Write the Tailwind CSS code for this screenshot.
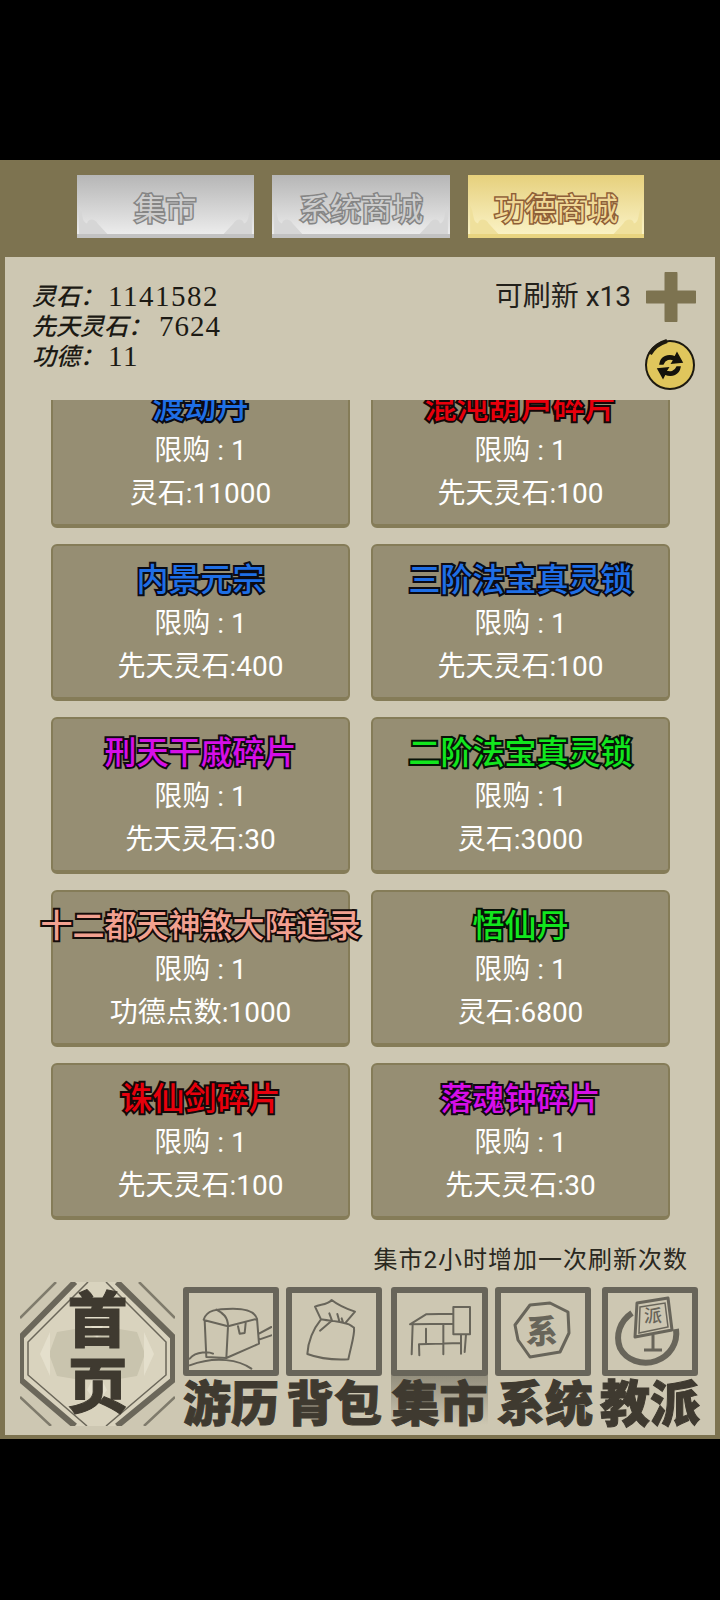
<!doctype html>
<html lang="zh-CN">
  <head>
    <meta charset="UTF-8" />
    <title>功德商城</title>
    <script src="https://cdn.jsdelivr.net/npm/@tailwindcss/browser@4"></script>
  </head>
  <body class="bg-black">
    <div class="w-[720px] h-[1600px] bg-black flex flex-col font-['Roboto','Noto_Sans_CJK_SC',sans-serif] overflow-hidden">
      <div class="h-[160px] shrink-0"></div>

      <!-- shop panel -->
      <main class="h-[1279px] shrink-0 bg-[#7d7350] flex flex-col px-[5px] pb-[4px]">
        <!-- tabs -->
        <div class="h-[97px] shrink-0 pt-[15px] pl-[72px] flex gap-[18px]">
          <div class="relative w-[177px] h-[63px] pt-[11px] bg-gradient-to-b from-[#b6b6b6] to-[#ececec] border-b-[4px] border-[#c2c2c2] flex items-center justify-center">
            <svg class="absolute left-0 bottom-0" width="36" height="30" viewBox="0 0 36 34"><path d="M0 2c5 8 2 18 9 20 1-6 9-6 12 0l11 12H0z" fill="#d6d6d6" /></svg>
            <svg class="absolute right-0 bottom-0" width="36" height="30" viewBox="0 0 36 34"><path d="M36 2c-5 8-2 18-9 20-1-6-9-6-12 0L4 34h32z" fill="#d6d6d6" /></svg>
            <span class="relative text-[31px] text-[#cdcdcd] [-webkit-text-stroke:3px_#858585] [paint-order:stroke_fill]">集市</span>
          </div>
          <div class="relative w-[178px] h-[63px] pt-[11px] bg-gradient-to-b from-[#b6b6b6] to-[#ececec] border-b-[4px] border-[#c2c2c2] flex items-center justify-center">
            <svg class="absolute left-0 bottom-0" width="36" height="30" viewBox="0 0 36 34"><path d="M0 2c5 8 2 18 9 20 1-6 9-6 12 0l11 12H0z" fill="#d6d6d6" /></svg>
            <svg class="absolute right-0 bottom-0" width="36" height="30" viewBox="0 0 36 34"><path d="M36 2c-5 8-2 18-9 20-1-6-9-6-12 0L4 34h32z" fill="#d6d6d6" /></svg>
            <span class="relative text-[31px] text-[#cdcdcd] [-webkit-text-stroke:3px_#858585] [paint-order:stroke_fill]">系统商城</span>
          </div>
          <div class="relative w-[176px] h-[63px] pt-[11px] bg-gradient-to-b from-[#e6d07c] to-[#faf2c4] border-b-[4px] border-[#e8d480] flex items-center justify-center">
            <svg class="absolute left-0 bottom-0" width="36" height="30" viewBox="0 0 36 34"><path d="M0 2c5 8 2 18 9 20 1-6 9-6 12 0l11 12H0z" fill="#efe09c" /></svg>
            <svg class="absolute right-0 bottom-0" width="36" height="30" viewBox="0 0 36 34"><path d="M36 2c-5 8-2 18-9 20-1-6-9-6-12 0L4 34h32z" fill="#efe09c" /></svg>
            <span class="relative text-[31px] text-[#efd795] [-webkit-text-stroke:3px_#8e5f38] [paint-order:stroke_fill]">功德商城</span>
          </div>
        </div>

        <div class="flex-1 bg-[#cdc7b2] flex flex-col overflow-hidden">
          <!-- balance header -->
          <div class="relative z-10 h-[143px] shrink-0 bg-[#cdc7b2] flex justify-between pl-[27px] pr-[19px]">
            <div class="pt-[25px] text-[#1c1a14]">
              <div class="h-[30px] flex items-center text-[24px] italic"><span class="w-[76px] font-medium">灵石：</span><span class="font-['Liberation_Serif',serif] not-italic font-normal text-[29px] tracking-[1.5px]">1141582</span></div>
              <div class="h-[30px] flex items-center text-[24px] italic"><span class="w-[127px] font-medium">先天灵石：</span><span class="font-['Liberation_Serif',serif] not-italic font-normal text-[29px] tracking-[1px]">7624</span></div>
              <div class="h-[30px] flex items-center text-[24px] italic"><span class="w-[76px] font-medium">功德：</span><span class="font-['Liberation_Serif',serif] not-italic font-normal text-[29px] tracking-[1.5px]">11</span></div>
            </div>
            <div class="flex flex-col items-end pt-[15px]">
              <div class="flex items-center gap-[15px]">
                <span class="text-[28px] text-[#23211b]">可刷新 x13</span>
                <svg width="50" height="50" viewBox="0 0 50 50"><path d="M25 2v46M2 25h46" stroke="#7d7350" stroke-width="13" stroke-linecap="round" /></svg>
              </div>
              <svg class="mt-[16px]" width="52" height="52" viewBox="0 0 52 52">
                <circle cx="26" cy="27" r="24" fill="#e0c65c" stroke="#1d1a10" stroke-width="2" />
                <path d="M6 16c4-7 10-11 17-13" fill="none" stroke="#1d1a10" stroke-width="4" />
                <path d="M16 26c1-7 8-10 15-7l2-4 5 9-10 1 2-3c-4-2-9-1-11 4z" fill="#15130c" stroke="#15130c" stroke-width="1.5" />
                <path d="M36 29c-1 7-8 10-15 7l-2 4-5-9 10-1-2 3c4 2 9 1 11-4z" fill="#15130c" stroke="#15130c" stroke-width="1.5" />
              </svg>
            </div>
          </div>

          <!-- goods list, scrolled up a little -->
          <div class="h-[839px] shrink-0 overflow-hidden">
            <div class="-mt-[29px] pl-[46px] grid grid-cols-[299px_299px] gap-x-[21px] gap-y-[16px]">
              <div class="h-[157px] pt-[13px] bg-[#968e73] border-2 border-b-[4px] border-[#857c58] rounded-[6px] text-center text-white text-[28px]">
                <div class="h-[43px] leading-[43px] whitespace-nowrap text-[32px] font-medium text-[#1f6fe6] [-webkit-text-stroke:4px_#0b0b14] [paint-order:stroke_fill]">渡劫丹</div>
                <div class="h-[43px] leading-[43px]">限购 : 1</div>
                <div class="h-[43px] leading-[43px]">灵石:11000</div>
              </div>
              <div class="h-[157px] pt-[13px] bg-[#968e73] border-2 border-b-[4px] border-[#857c58] rounded-[6px] text-center text-white text-[28px]">
                <div class="h-[43px] leading-[43px] whitespace-nowrap text-[32px] font-medium text-[#e8000c] [-webkit-text-stroke:4px_#140808] [paint-order:stroke_fill]">混沌葫芦碎片</div>
                <div class="h-[43px] leading-[43px]">限购 : 1</div>
                <div class="h-[43px] leading-[43px]">先天灵石:100</div>
              </div>
              <div class="h-[157px] pt-[13px] bg-[#968e73] border-2 border-b-[4px] border-[#857c58] rounded-[6px] text-center text-white text-[28px]">
                <div class="h-[43px] leading-[43px] whitespace-nowrap text-[32px] font-medium text-[#1f6fe6] [-webkit-text-stroke:4px_#0b0b14] [paint-order:stroke_fill]">内景元宗</div>
                <div class="h-[43px] leading-[43px]">限购 : 1</div>
                <div class="h-[43px] leading-[43px]">先天灵石:400</div>
              </div>
              <div class="h-[157px] pt-[13px] bg-[#968e73] border-2 border-b-[4px] border-[#857c58] rounded-[6px] text-center text-white text-[28px]">
                <div class="h-[43px] leading-[43px] whitespace-nowrap text-[32px] font-medium text-[#1f6fe6] [-webkit-text-stroke:4px_#0b0b14] [paint-order:stroke_fill]">三阶法宝真灵锁</div>
                <div class="h-[43px] leading-[43px]">限购 : 1</div>
                <div class="h-[43px] leading-[43px]">先天灵石:100</div>
              </div>
              <div class="h-[157px] pt-[13px] bg-[#968e73] border-2 border-b-[4px] border-[#857c58] rounded-[6px] text-center text-white text-[28px]">
                <div class="h-[43px] leading-[43px] whitespace-nowrap text-[32px] font-medium text-[#d60ee8] [-webkit-text-stroke:4px_#120812] [paint-order:stroke_fill]">刑天干戚碎片</div>
                <div class="h-[43px] leading-[43px]">限购 : 1</div>
                <div class="h-[43px] leading-[43px]">先天灵石:30</div>
              </div>
              <div class="h-[157px] pt-[13px] bg-[#968e73] border-2 border-b-[4px] border-[#857c58] rounded-[6px] text-center text-white text-[28px]">
                <div class="h-[43px] leading-[43px] whitespace-nowrap text-[32px] font-medium text-[#12e61e] [-webkit-text-stroke:4px_#081208] [paint-order:stroke_fill]">二阶法宝真灵锁</div>
                <div class="h-[43px] leading-[43px]">限购 : 1</div>
                <div class="h-[43px] leading-[43px]">灵石:3000</div>
              </div>
              <div class="h-[157px] pt-[13px] bg-[#968e73] border-2 border-b-[4px] border-[#857c58] rounded-[6px] text-center text-white text-[28px] flex flex-col items-center">
                <div class="h-[43px] leading-[43px] whitespace-nowrap text-[32px] font-medium text-[#f2a090] [-webkit-text-stroke:4px_#140c0a] [paint-order:stroke_fill]">十二都天神煞大阵道录</div>
                <div class="h-[43px] leading-[43px]">限购 : 1</div>
                <div class="h-[43px] leading-[43px]">功德点数:1000</div>
              </div>
              <div class="h-[157px] pt-[13px] bg-[#968e73] border-2 border-b-[4px] border-[#857c58] rounded-[6px] text-center text-white text-[28px]">
                <div class="h-[43px] leading-[43px] whitespace-nowrap text-[32px] font-medium text-[#12e61e] [-webkit-text-stroke:4px_#081208] [paint-order:stroke_fill]">悟仙丹</div>
                <div class="h-[43px] leading-[43px]">限购 : 1</div>
                <div class="h-[43px] leading-[43px]">灵石:6800</div>
              </div>
              <div class="h-[157px] pt-[13px] bg-[#968e73] border-2 border-b-[4px] border-[#857c58] rounded-[6px] text-center text-white text-[28px]">
                <div class="h-[43px] leading-[43px] whitespace-nowrap text-[32px] font-medium text-[#e8000c] [-webkit-text-stroke:4px_#140808] [paint-order:stroke_fill]">诛仙剑碎片</div>
                <div class="h-[43px] leading-[43px]">限购 : 1</div>
                <div class="h-[43px] leading-[43px]">先天灵石:100</div>
              </div>
              <div class="h-[157px] pt-[13px] bg-[#968e73] border-2 border-b-[4px] border-[#857c58] rounded-[6px] text-center text-white text-[28px]">
                <div class="h-[43px] leading-[43px] whitespace-nowrap text-[32px] font-medium text-[#d60ee8] [-webkit-text-stroke:4px_#120812] [paint-order:stroke_fill]">落魂钟碎片</div>
                <div class="h-[43px] leading-[43px]">限购 : 1</div>
                <div class="h-[43px] leading-[43px]">先天灵石:30</div>
              </div>
            </div>
          </div>

          <!-- refresh hint -->
          <div class="h-[42px] shrink-0 flex items-center justify-end pr-[27px] text-[24px] tracking-[1px] text-[#2a2820]">集市2小时增加一次刷新次数</div>

          <!-- bottom nav -->
          <div class="relative flex-1 flex pl-[15px]">
            <div class="relative mt-[1px] w-[155px] h-[144px] shrink-0 flex flex-col items-center">
              <svg class="absolute inset-0" width="155" height="144" viewBox="0 0 155 144">
                <path d="M55 0h40l58 55v43l-58 46H55L1 98V55z" fill="#d9d3be" />
                <path d="M77 56l16-10 24 4 8 22-8 22-24 4-16-10-16 10-24-4-8-22 8-22 24-4z" fill="#c9c4ae" />
                <path d="M77 56l-10-20 10-14 10 14zM77 88l-10 20 10 14 10-14zM30 50l-10 22 10 22zM124 50l10 22-10 22z" fill="#e4dfcc" />
                <path d="M55 0L1 55v43l54 46M97 0l56 55v43l-56 46" fill="none" stroke="#6b675a" stroke-width="6" />
                <path d="M68 0L8 60v33l59 51M86 0l60 60v33l-60 51" fill="none" stroke="#6b675a" stroke-width="1.5" />
                <path d="M0 36L36 0M119 0l36 36M0 115l31 29M155 115l-31 29" fill="none" stroke="#7f7b6c" stroke-width="2.5" />
              </svg>
              <span class="relative mt-[5px] text-[60px] leading-[69px] font-black text-[#3f3a30] [-webkit-text-stroke:1px_#3f3a30]">首</span>
              <span class="relative text-[60px] leading-[63px] font-black text-[#3f3a30] [-webkit-text-stroke:1px_#3f3a30]">页</span>
            </div>

            <div class="w-[96px] ml-[8px] shrink-0 pt-[6px]">
              <div class="h-[89px] border-[6px] border-[#68655a] rounded-[3px] bg-[#cdc7b2]">
                <svg width="83" height="77" viewBox="18 18 249 231" fill="none" stroke="#68655a" stroke-width="6" stroke-linecap="round" stroke-linejoin="round">
                  <path d="M62 98c8-28 38-33 88-33 40 0 65 7 72 30M65 100l5 110 60 3 5-95zM135 118l87-23 6 75-98 43M135 118c0-28-15-40-35-50M165 118l5 22 15-2 3-30M20 215c20-25 60-20 70-15M20 235c80-30 150-15 185 10M228 140l37-20M228 158l37-13" />
                </svg>
              </div>
              <div class="h-[50px] mt-[4px] -mx-[2px] text-center whitespace-nowrap text-[48px] leading-[50px] font-black text-[#3f3a30] [-webkit-text-stroke:1px_#3f3a30]">游历</div>
            </div>
            <div class="w-[96px] ml-[7px] shrink-0 pt-[6px]">
              <div class="h-[89px] border-[6px] border-[#68655a] rounded-[3px] bg-[#cdc7b2]">
                <svg width="84" height="77" viewBox="36 39 252 231" fill="none" stroke="#68655a" stroke-width="6" stroke-linecap="round" stroke-linejoin="round">
                  <path d="M105 80c15-8 35-4 50-20 15 12 40 25 70 35l-30 35c-25-8-55-8-72-12zM123 118c-20 25-38 55-41 104 40 15 85 18 123 16 8-40 20-75 17-95-8-6-15-12-27-13M120 152l35-30M148 100l8 22M172 102l6 22M185 115l4 12" />
                </svg>
              </div>
              <div class="h-[50px] mt-[4px] -mx-[2px] text-center whitespace-nowrap text-[48px] leading-[50px] font-black text-[#3f3a30] [-webkit-text-stroke:1px_#3f3a30]">背包</div>
            </div>
            <div class="relative w-[97px] ml-[9px] shrink-0 pt-[6px]">
              <div class="absolute left-0 right-0 top-[46px] h-[98px] bg-gradient-to-b from-[#5f5b4d] to-[#cdc7b2]"></div>
              <div class="relative h-[89px] border-[6px] border-[#68655a] rounded-[3px] bg-[#cdc7b2]">
                <svg width="85" height="77" viewBox="18 18 255 231" fill="none" stroke="#68655a" stroke-width="6" stroke-linecap="round" stroke-linejoin="round">
                  <path d="M57 112l48-30 82-2v30zM57 112l130-2M187 60h50v82h-50zM65 112l-3 90M157 112v90M105 125v45M85 205l-1-33 126-4M210 142v58M225 142l-4 53" />
                </svg>
              </div>
              <div class="relative h-[50px] mt-[4px] text-center whitespace-nowrap text-[48px] leading-[50px] font-black text-[#3f3a30] [-webkit-text-stroke:1px_#3f3a30]">集市</div>
            </div>
            <div class="w-[96px] ml-[7px] shrink-0 pt-[6px]">
              <div class="h-[89px] border-[6px] border-[#68655a] rounded-[3px] bg-[#cdc7b2]">
                <svg width="84" height="77" viewBox="0 0 84 77">
                  <path d="M14 32L29 12l20-2 18 9 1 21-9 19-30 5-12-17z" fill="none" stroke="#68655a" stroke-width="3" stroke-linejoin="round" />
                  <text x="41" y="50" text-anchor="middle" font-family="Noto Sans CJK SC" font-weight="900" font-size="32" fill="#68655a">系</text>
                </svg>
              </div>
              <div class="h-[50px] mt-[4px] ml-[2px] -mr-[2px] text-center whitespace-nowrap text-[48px] leading-[50px] font-black text-[#3f3a30] [-webkit-text-stroke:1px_#3f3a30]">系统</div>
            </div>
            <div class="w-[96px] ml-[11px] shrink-0 pt-[6px]">
              <div class="h-[89px] border-[6px] border-[#68655a] rounded-[3px] bg-[#cdc7b2]">
                <svg width="84" height="77" viewBox="0 0 84 77">
                  <path d="M24 20c-12 8-17 22-12 35 6 12 22 18 36 13 14-5 22-18 20-32" fill="none" stroke="#68655a" stroke-width="6" />
                  <path d="M29 10l31-5 4 32-37 7z" fill="#cdc7b2" stroke="#68655a" stroke-width="3" stroke-linejoin="round" />
                  <path d="M32 14l25-4 3 24-29 6z" fill="none" stroke="#68655a" stroke-width="1.5" />
                  <path d="M45 42v14M36 57h18" fill="none" stroke="#68655a" stroke-width="3" />
                  <text x="45" y="29" text-anchor="middle" font-family="Noto Sans CJK SC" font-weight="500" font-size="18" fill="#68655a">派</text>
                </svg>
              </div>
              <div class="h-[50px] mt-[4px] -mx-[2px] text-center whitespace-nowrap text-[50px] leading-[50px] font-black text-[#3f3a30] [-webkit-text-stroke:1px_#3f3a30]">教派</div>
            </div>
          </div>
        </div>
      </main>
    </div>
  </body>
</html>
